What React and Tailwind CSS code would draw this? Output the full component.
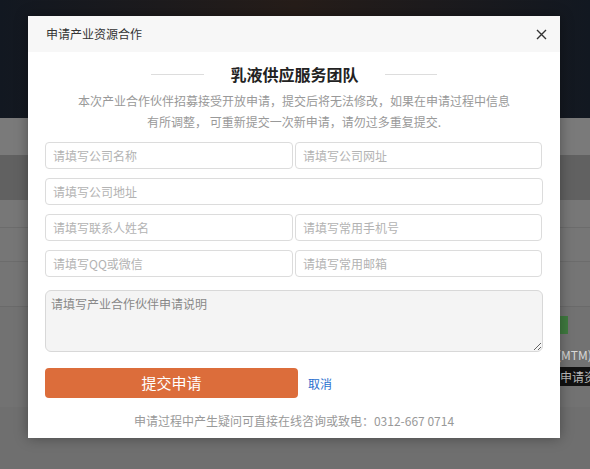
import React from 'react';

const FONT = { fontFamily: '"Microsoft YaHei", "Noto Sans CJK SC", "Noto Sans", sans-serif' };

const Field = ({ placeholder, className = '' }) => (
    <input
        type="text"
        placeholder={placeholder}
        className={`h-[27px] rounded-[4px] border border-[#dcdcdc] bg-white px-[7px] text-[12px] text-[#333] placeholder:text-[#b3b3b3] outline-none ${className}`}
    />
);

const App = () => {
    return (
        <div className="relative h-[469px] w-full overflow-hidden bg-[#6f6f6f]" style={FONT}>
            {/* page behind the overlay */}
            <div className="h-[118px] bg-linear-to-r from-[#121821] via-[#261d19] to-[#121821]" />
            <div className="h-[37px] bg-[#7a7a7a]" />
            <div className="h-[45px] bg-[#616161]" />
            <div className="h-[28px] border-b border-[#6c6c6c] bg-[#777777]" />
            <div className="h-[34px] border-b border-[#6c6c6c] bg-[#767676]" />
            <div className="h-[45px] border-b border-[#6a6a6a] bg-[#757575]" />
            <div className="flex h-[100px] justify-end bg-[#727272]">
                <div className="flex w-[30px] flex-col pt-[9px]">
                    <div className="h-[18px] w-[8px] bg-[#3f7a3f]" />
                    <div className="-ml-[3px] mt-[13px] whitespace-nowrap text-[12px] leading-[16px] text-[#d8d8d8]">(MTM):</div>
                    <div className="mt-[4px] h-[19px] whitespace-nowrap bg-[#111] text-[12px] leading-[19px] text-[#bbb]">申请资</div>
                </div>
            </div>

            {/* modal */}
            <div className="absolute left-[28px] top-[16px] w-[532px] bg-white shadow-[0_0_12px_rgba(0,0,0,0.35)]">
                <div className="flex h-[36px] items-center justify-between bg-[#f7f7f7] pl-[18px] pr-[12px]">
                    <span className="text-[12px] text-[#333]">申请产业资源合作</span>
                    <svg width="11" height="11" viewBox="0 0 11 11" className="mr-[1px]">
                        <path d="M1 1L10 10M10 1L1 10" stroke="#333" strokeWidth="1.4" />
                    </svg>
                </div>

                <div className="px-[17px] pb-[9px]">
                    <div className="mt-[10px] flex items-center justify-center gap-[26px]">
                        <div className="h-px w-[53px] bg-[#dddddd]" />
                        <h2 className="text-[16px] font-bold leading-[24px] text-[#222]">乳液供应服务团队</h2>
                        <div className="h-px w-[52px] bg-[#dddddd]" />
                    </div>
                    <p className="mt-[4px] text-center text-[12px] leading-[21px] text-[#999]">
                        本次产业合作伙伴招募接受开放申请，提交后将无法修改，如果在申请过程中信息
                        <br />
                        有所调整， 可重新提交一次新申请，请勿过多重复提交.
                    </p>

                    <div className="mt-[10px] flex flex-col gap-[9px]">
                        <div className="flex gap-[2px]">
                            <Field placeholder="请填写公司名称" className="w-[248px]" />
                            <Field placeholder="请填写公司网址" className="w-[247px]" />
                        </div>
                        <Field placeholder="请填写公司地址" className="w-full" />
                        <div className="flex gap-[2px]">
                            <Field placeholder="请填写联系人姓名" className="w-[248px]" />
                            <Field placeholder="请填写常用手机号" className="w-[247px]" />
                        </div>
                        <div className="flex gap-[2px]">
                            <Field placeholder="请填写QQ或微信" className="w-[248px]" />
                            <Field placeholder="请填写常用邮箱" className="w-[247px]" />
                        </div>
                        <textarea
                            placeholder="请填写产业合作伙伴申请说明"
                            className="mt-[4px] h-[62px] w-full rounded-[6px] border border-[#d8d8d8] bg-[#f4f4f4] px-[5px] py-[5px] text-[12px] leading-[16px] text-[#333] placeholder:text-[#888] outline-none"
                        />
                    </div>

                    <div className="mt-[16px] flex items-center">
                        <button className="h-[30px] w-[253px] rounded-[4px] bg-[#dc6d3b] text-[15px] text-white">
                            提交申请
                        </button>
                        <a className="ml-[10px] mt-[2px] text-[12px] text-[#2a6fce]">取消</a>
                    </div>

                    <p className="mt-[15px] text-center text-[12px] leading-[16px] text-[#999]">
                        申请过程中产生疑问可直接在线咨询或致电：0312-667 0714
                    </p>
                </div>
            </div>
        </div>
    );
};

export default App;
